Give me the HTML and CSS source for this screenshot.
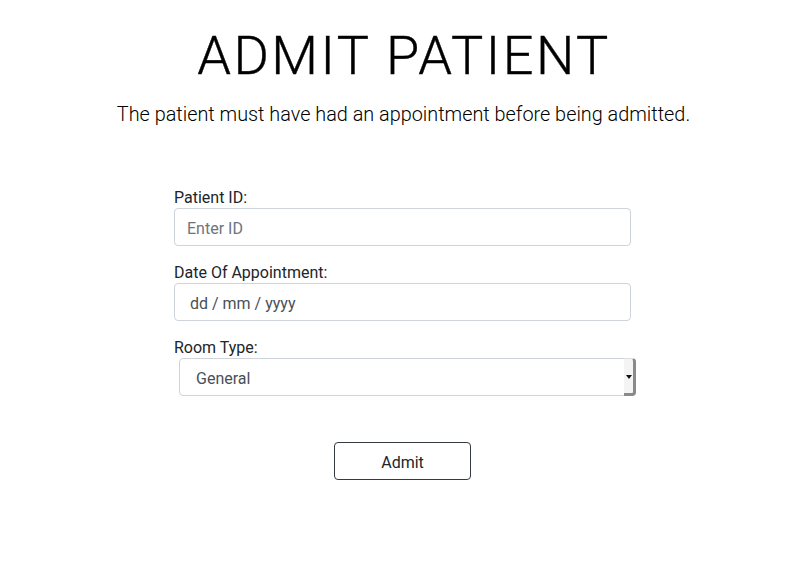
FILE: index.html
```html
<!DOCTYPE html>
<html lang="en">
<head>
<meta charset="utf-8">
<title>Admit Patient</title>
<link rel="stylesheet" href="styles.css">
</head>
<body>
<main class="page">
  <h1 class="title">ADMIT PATIENT</h1>
  <p class="subtitle">The patient must have had an appointment before being admitted.</p>
  <form class="form">
    <div class="group">
      <label class="label" for="pid">Patient ID:</label>
      <input class="control" id="pid" type="text" placeholder="Enter ID">
    </div>
    <div class="group">
      <label class="label" for="doa">Date Of Appointment:</label>
      <div class="control date">dd / mm / yyyy</div>
    </div>
    <div class="group">
      <label class="label" for="room">Room Type:</label>
      <div class="select-wrap">
        <div class="control select" id="room">General</div>
        <span class="select-btn"><span class="arrow"></span></span>
      </div>
    </div>
    <div class="actions">
      <button class="btn" type="button">Admit</button>
    </div>
  </form>
</main>
</body>
</html>
```

FILE: styles.css
```css
* { box-sizing: border-box; }
html, body { margin: 0; padding: 0; background: #fff; }
body {
  font-family: Roboto, "Noto Sans", sans-serif;
  color: #212529;
}
.page {
  display: flex;
  flex-direction: column;
  align-items: center;
  padding: 24px 0 0 13px;
}
.title {
  margin: 0;
  font-size: 54px;
  font-weight: 300;
  letter-spacing: 2.5px;
  line-height: 64px;
  color: #000;
  padding-left: 3px;
  -webkit-text-stroke: 0.4px #000;
}
.subtitle {
  margin: 13px 0 0;
  font-size: 19.85px;
  font-weight: 300;
  line-height: 28px;
  color: #000;
  padding-left: 2px;
}
.form {
  width: 457px;
  margin-top: 56px;
  display: flex;
  flex-direction: column;
}
.group { display: flex; flex-direction: column; margin-bottom: 14px; }
.label {
  font-size: 16px;
  line-height: 20px;
  margin: 3px 0 0;
  color: #212529;
}
.control {
  height: 38px;
  width: 100%;
  border: 1px solid #ced4da;
  border-radius: 4px;
  padding: 0 12px;
  font-family: Roboto, "Noto Sans", sans-serif;
  font-size: 16px;
  color: #495057;
  background: #fff;
  outline: none;
  display: flex;
  align-items: center;
  padding-top: 2px;
}
.control::placeholder { color: #6c757d; }
.date { padding-left: 15px; }
.select-wrap {
  position: relative;
  margin-left: 5px;
  width: 457px;
}
.select { padding-left: 16px; }
.select-btn {
  position: absolute;
  right: 0;
  top: 0;
  width: 12px;
  height: 38px;
  background: #f4f4f4;
  border-right: 3px solid #8a8a8a;
  border-bottom: 3px solid #8a8a8a;
  border-top: 1px solid #ddd;
  border-radius: 0 4px 4px 0;
  display: flex;
  align-items: center;
  justify-content: center;
}
.arrow {
  width: 0;
  height: 0;
  border-left: 3px solid transparent;
  border-right: 3px solid transparent;
  border-top: 4px solid #111;
  margin-top: 1px;
}
.actions {
  display: flex;
  justify-content: center;
  margin-top: 32px;
}
.btn {
  width: 137px;
  height: 38px;
  border: 1px solid #343a40;
  border-radius: 4px;
  background: #fff;
  font-family: Roboto, "Noto Sans", sans-serif;
  font-size: 16px;
  color: #212529;
  padding: 2px 0 0;
}
```
